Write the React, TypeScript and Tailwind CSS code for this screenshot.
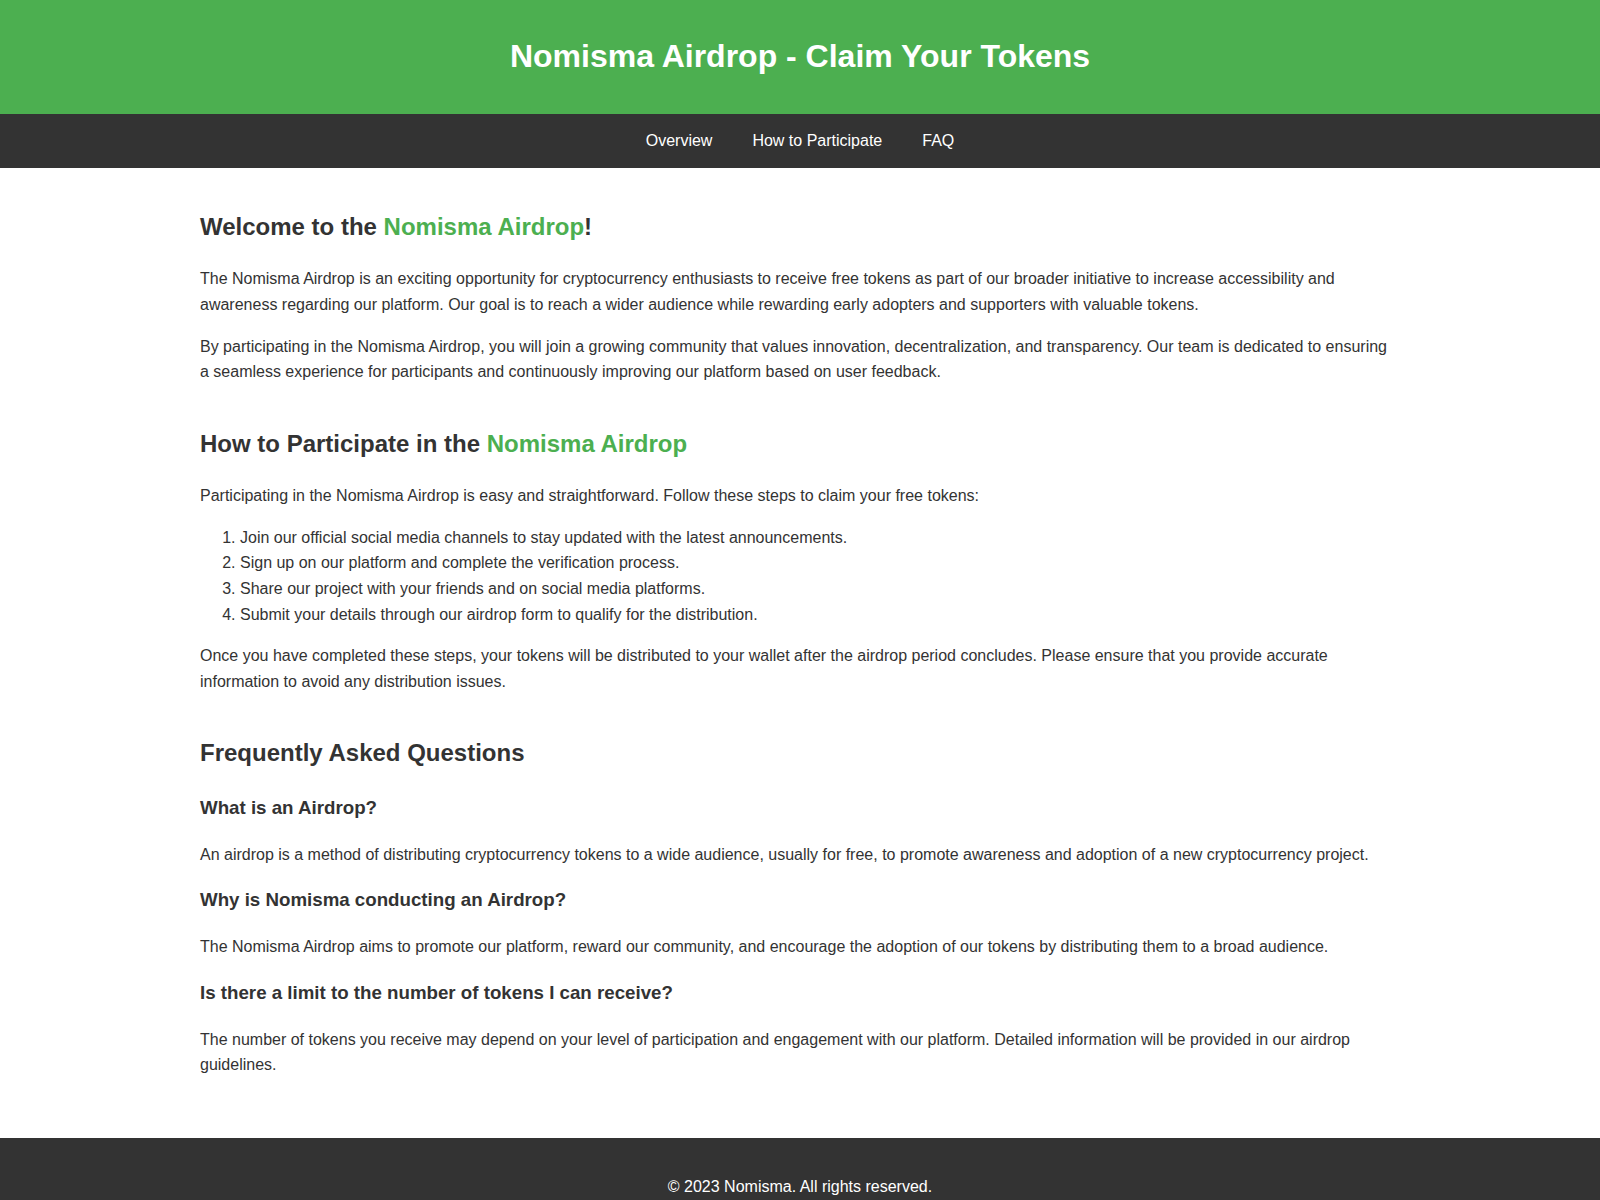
import React from "react";

const Accent = ({ children }: { children: React.ReactNode }) => (
  <span className="text-[#4CAF50]">{children}</span>
);

const steps = [
  "Join our official social media channels to stay updated with the latest announcements.",
  "Sign up on our platform and complete the verification process.",
  "Share our project with your friends and on social media platforms.",
  "Submit your details through our airdrop form to qualify for the distribution.",
];

const faqs = [
  {
    q: "What is an Airdrop?",
    a: "An airdrop is a method of distributing cryptocurrency tokens to a wide audience, usually for free, to promote awareness and adoption of a new cryptocurrency project.",
  },
  {
    q: "Why is Nomisma conducting an Airdrop?",
    a: "The Nomisma Airdrop aims to promote our platform, reward our community, and encourage the adoption of our tokens by distributing them to a broad audience.",
  },
  {
    q: "Is there a limit to the number of tokens I can receive?",
    a: "The number of tokens you receive may depend on your level of participation and engagement with our platform. Detailed information will be provided in our airdrop guidelines.",
  },
];

export default function App() {
  return (
    <div className="min-h-screen bg-white font-['Liberation_Sans',Arial,sans-serif] text-[16px] leading-[1.6] text-[#333333]">
      <header className="bg-[#4CAF50] py-[10px] text-center text-white">
        <h1 className="my-[21.44px] text-[32px] font-bold leading-[1.6]">
          Nomisma Airdrop - Claim Your Tokens
        </h1>
      </header>

      <nav className="flex h-[54px] items-center justify-center bg-[#333333]">
        <a href="#overview" className="mx-5 text-white">
          Overview
        </a>
        <a href="#participate" className="mx-5 text-white">
          How to Participate
        </a>
        <a href="#faq" className="mx-5 text-white">
          FAQ
        </a>
      </nav>

      <main className="mx-auto w-[1200px] pb-[60px] pt-[40px]">
        <section id="overview">
          <h2 className="text-[24px] font-bold leading-[1.6]">
            Welcome to the <Accent>Nomisma Airdrop</Accent>!
          </h2>
          <p className="mt-5">
            The Nomisma Airdrop is an exciting opportunity for cryptocurrency enthusiasts to receive free tokens as part of our broader initiative to increase accessibility and awareness regarding our platform. Our goal is to reach a wider audience while rewarding early adopters and supporters with valuable tokens.
          </p>
          <p className="mt-4">
            By participating in the Nomisma Airdrop, you will join a growing community that values innovation, decentralization, and transparency. Our team is dedicated to ensuring a seamless experience for participants and continuously improving our platform based on user feedback.
          </p>
        </section>

        <section id="participate" className="mt-10">
          <h2 className="text-[24px] font-bold leading-[1.6]">
            How to Participate in the <Accent>Nomisma Airdrop</Accent>
          </h2>
          <p className="mt-5">
            Participating in the Nomisma Airdrop is easy and straightforward. Follow these steps to claim your free tokens:
          </p>
          <ol className="mt-4 list-decimal pl-10">
            {steps.map((s) => (
              <li key={s}>{s}</li>
            ))}
          </ol>
          <p className="mt-4">
            Once you have completed these steps, your tokens will be distributed to your wallet after the airdrop period concludes. Please ensure that you provide accurate information to avoid any distribution issues.
          </p>
        </section>

        <section id="faq" className="mt-10">
          <h2 className="text-[24px] font-bold leading-[1.6]">Frequently Asked Questions</h2>
          {faqs.map((f, i) => (
            <div key={f.q} className={i === 0 ? "mt-5" : "mt-[18px]"}>
              <h3 className="text-[18.72px] font-bold leading-[1.6]">{f.q}</h3>
              <p className="mt-[19px]">{f.a}</p>
            </div>
          ))}
        </section>
      </main>

      <footer className="bg-[#333333] py-5 text-center text-white">
        <p className="my-4">© 2023 Nomisma. All rights reserved.</p>
      </footer>
    </div>
  );
}
